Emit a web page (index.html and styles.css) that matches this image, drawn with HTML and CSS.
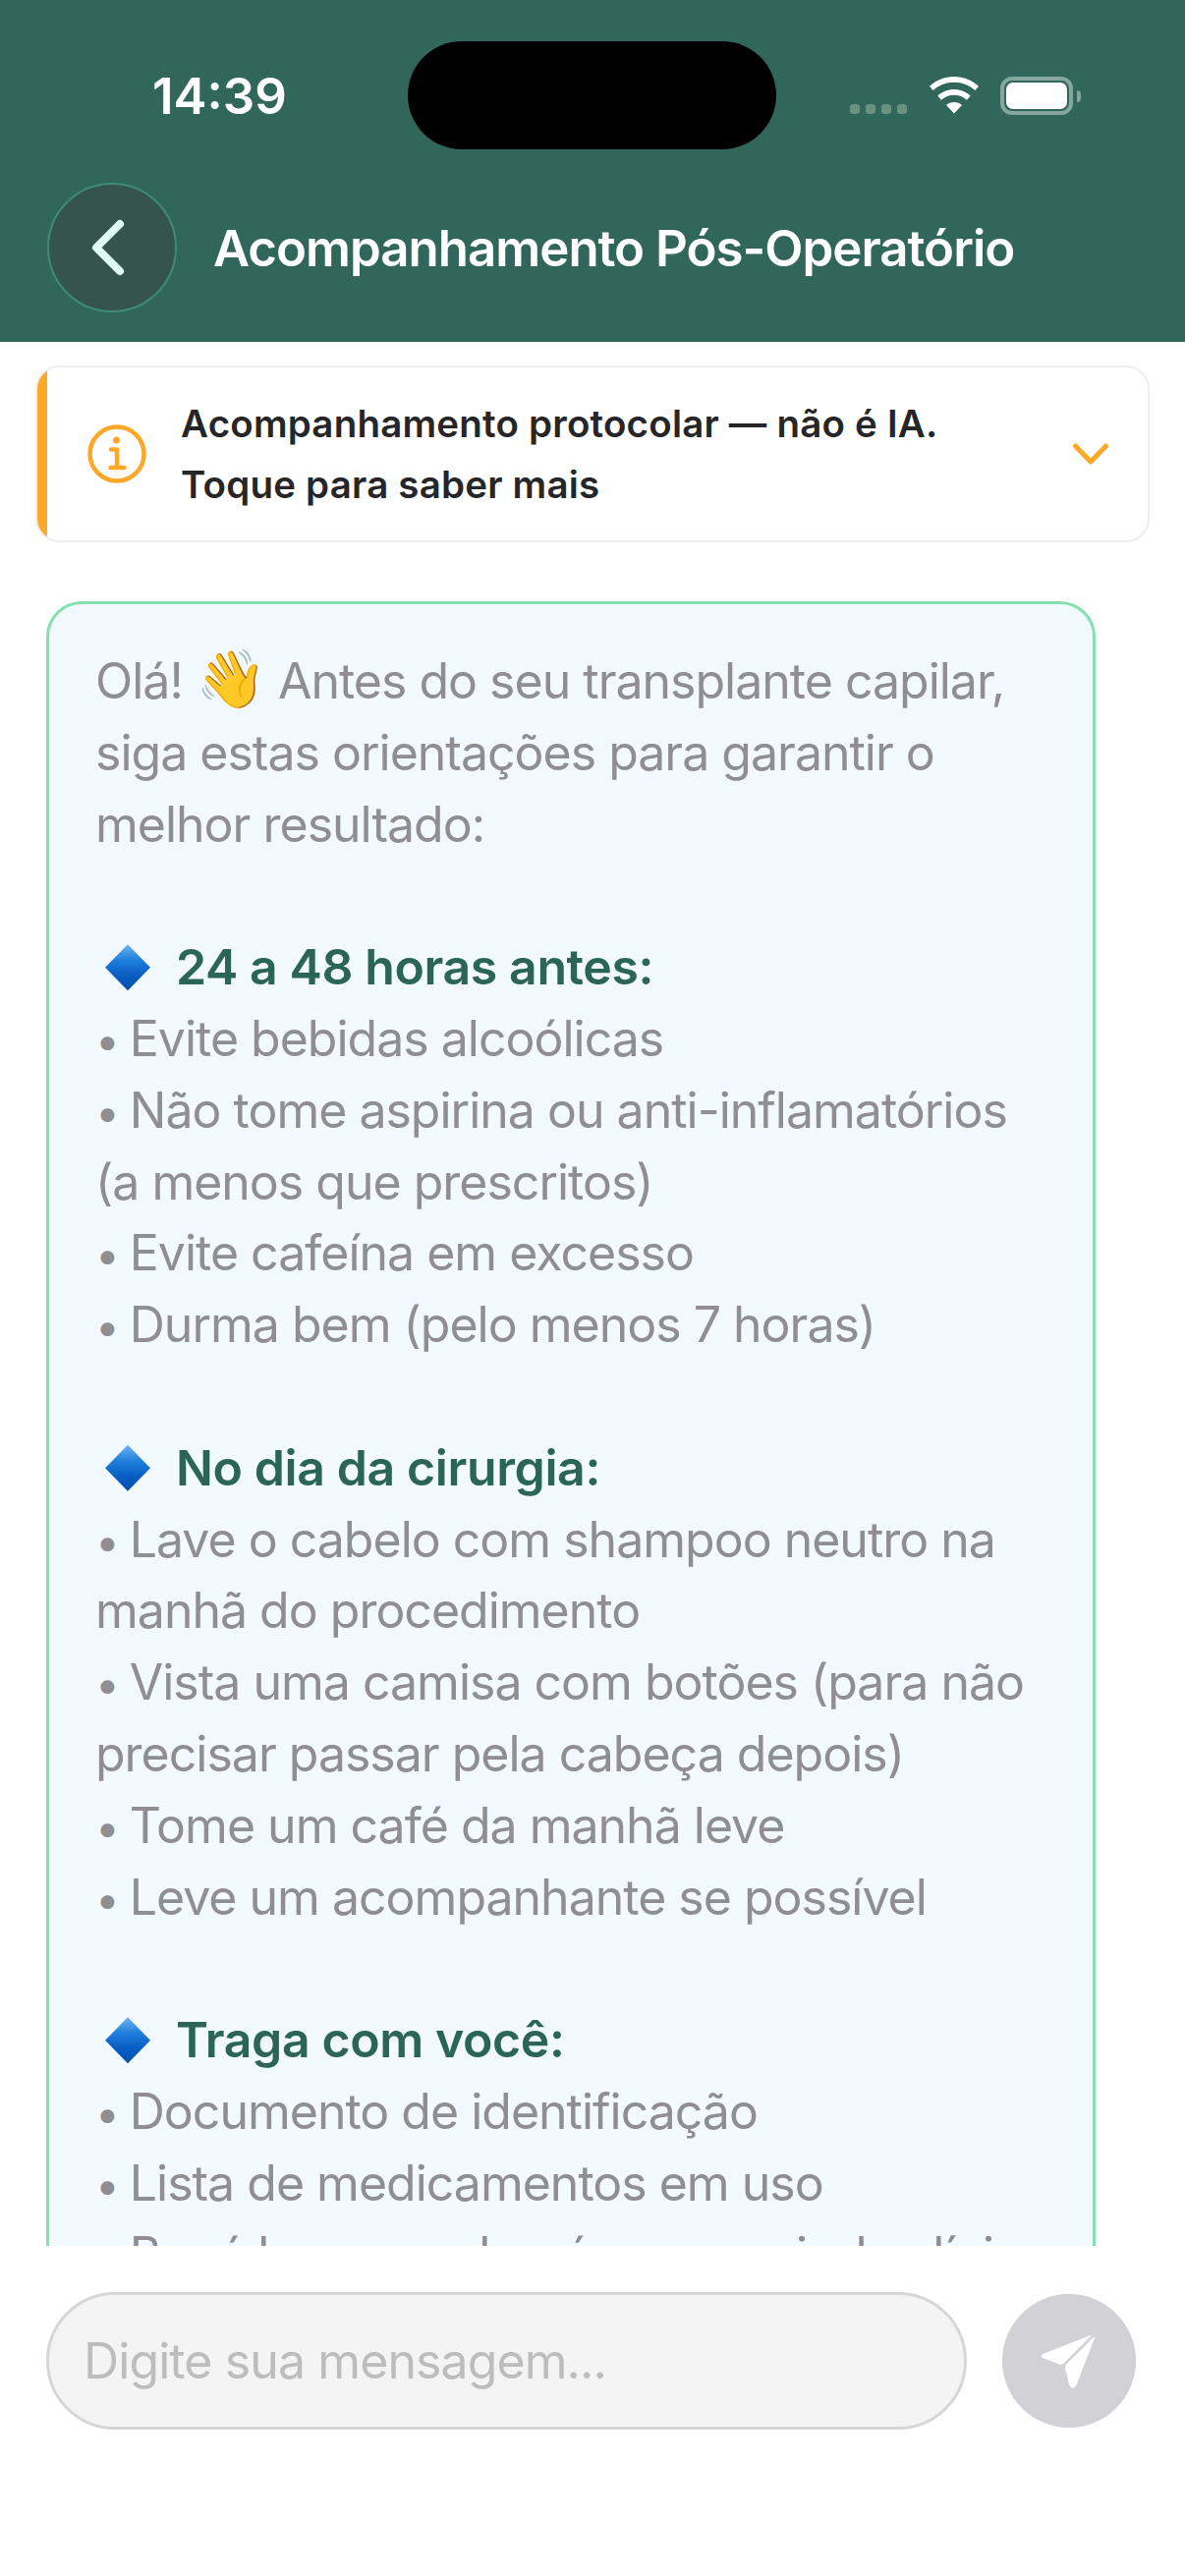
FILE: index.html
```html
<!doctype html>
<html lang="pt-BR">
<head>
<title>Acompanhamento Pós-Operatório</title>
<meta charset="utf-8" />
<link rel="stylesheet" href="styles.css">
</head>
<body>
    <div class="phone">
        <header class="top">
            <div class="status">
                <span class="time">14:39</span>
                <div class="island"></div>
                <div class="status-icons">
                    <div class="signal"><i></i><i></i><i></i><i></i></div>
                    <svg class="wifi" width="52" height="38" viewBox="0 0 52 38">
                        <path fill="#fff" d="M26 0C16 0 7.500 3.800 1 9.800L4.600 14C10.200 9 17.700 5.800 26 5.800S41.800 9 47.400 14L51 9.800C44.500 3.800 36 0 26 0Z"/>
                        <path fill="#fff" d="M26 13C19.500 13 13.700 15.500 9.300 19.500L13 23.800C16.400 20.700 21 18.800 26 18.800S35.600 20.700 39 23.800L42.700 19.500C38.300 15.500 32.500 13 26 13Z"/>
                        <path fill="#fff" d="M26 26C23 26 20.200 27.100 18 29L26 37.500L34 29C31.800 27.100 29 26 26 26Z"/>
                    </svg>
                    <div class="battery"><div class="battery-fill"></div></div>
                    <div class="battery-tip"></div>
                </div>
            </div>
            <div class="nav">
                <button class="back">
                    <svg width="40" height="60" viewBox="0 0 40 60"><path d="M32 6 L8 30 L32 54" fill="none" stroke="#dffbf3" stroke-width="8" stroke-linecap="round" stroke-linejoin="round"/></svg>
                </button>
                <h1>Acompanhamento Pós-Operatório</h1>
            </div>
        </header>

        <div class="notice">
            <div class="notice-bar"></div>
            <svg class="notice-icon" width="60" height="60" viewBox="0 0 60 60">
                <circle cx="30" cy="30" r="27.500" fill="none" stroke="#ffa726" stroke-width="4.500"/>
                <circle cx="29.500" cy="16" r="3.500" fill="#ffa726"/>
                <path d="M24 25.500H30V44M23.500 44H37.500" fill="none" stroke="#ffa726" stroke-width="4.500" stroke-linecap="round" stroke-linejoin="round"/>
            </svg>
            <p class="notice-text">Acompanhamento protocolar — não é IA.<br>Toque para saber mais</p>
            <svg class="notice-arrow" width="38" height="24" viewBox="0 0 38 24"><path d="M3.500 4 L19 20 L34.500 4" fill="none" stroke="#ffa726" stroke-width="5" stroke-linecap="round" stroke-linejoin="round"/></svg>
        </div>

        <main class="chat">
            <div class="bubble">
                <p>Olá! <span class="emoji">👋</span> Antes do seu transplante capilar, siga estas orientações para garantir o melhor resultado:</p>
                <p class="gap"><b><span class="diamond"></span>24 a 48 horas antes:</b></p>
                <p><span class="dot">•</span>Evite bebidas alcoólicas</p>
                <p><span class="dot">•</span>Não tome aspirina ou anti-inflamatórios (a menos que prescritos)</p>
                <p><span class="dot">•</span>Evite cafeína em excesso</p>
                <p><span class="dot">•</span>Durma bem (pelo menos 7 horas)</p>
                <p class="gap"><b><span class="diamond"></span>No dia da cirurgia:</b></p>
                <p><span class="dot">•</span>Lave o cabelo com shampoo neutro na manhã do procedimento</p>
                <p><span class="dot">•</span>Vista uma camisa com botões (para não precisar passar pela cabeça depois)</p>
                <p><span class="dot">•</span>Tome um café da manhã leve</p>
                <p><span class="dot">•</span>Leve um acompanhante se possível</p>
                <p class="gap"><b><span class="diamond"></span>Traga com você:</b></p>
                <p><span class="dot">•</span>Documento de identificação</p>
                <p><span class="dot">•</span>Lista de medicamentos em uso</p>
                <p class="one-line"><span class="dot">•</span>Boné largo ou chapéu para sair da clínica</p>
            </div>
        </main>

        <footer class="composer">
            <div class="input">Digite sua mensagem...</div>
            <button class="send">
                <svg width="60" height="60" viewBox="144 158 180 180">
                    <path fill="#fff" d="M305 168 L156 226 Q143 233 154 240 L208 260 Q213 261 216 257 L303 170 Z"/>
                    <path fill="#fff" d="M311 174 L226 258 Q221 263 222 270 L235 323 Q245 340 256 323 L313 176 Z"/>
                </svg>
            </button>
        </footer>
    </div>
</body>
</html>
```

FILE: styles.css
```css
*{
    margin: 0;
    padding: 0;
    box-sizing: border-box;
}
html, body{
    height: 100%;
    background: #fff;
}
body{
    font-family: Inter, "Noto Sans", sans-serif;
}
.phone{
    width: 1206px;
    height: 2622px;
    display: flex;
    flex-direction: column;
    overflow: hidden;
}

/* topo */
.top{
    height: 348px;
    background: #31665a;
    flex: none;
}
.status{
    height: 186px;
    padding: 42px 106px 0 155px;
    display: flex;
    justify-content: space-between;
    position: relative;
}
.time{
    font-size: 51px;
    font-weight: 600;
    line-height: 58px;
    margin-top: 27px;
    color: #fff;
}
.island{
    position: absolute;
    left: 415px;
    top: 42px;
    width: 375px;
    height: 110px;
    border-radius: 55px;
    background: #000;
}
.status-icons{
    display: flex;
    align-items: flex-start;
    margin-top: 36px;
}
.signal{
    display: flex;
    gap: 6px;
    margin: 28px 22px 0 0;
}
.signal i{
    width: 10px;
    height: 10px;
    border-radius: 3px;
    background: #68917f;
}
.wifi{
    margin: 0 21px 0 0;
}
.battery{
    width: 74px;
    height: 39px;
    border: 4px solid #85a79e;
    border-radius: 12px;
    padding: 2px;
}
.battery-fill{
    width: 100%;
    height: 100%;
    background: #fff;
    border-radius: 7px;
}
.battery-tip{
    width: 4px;
    height: 12px;
    margin: 14px 0 0 4px;
    background: #85a79e;
    border-radius: 0 4px 4px 0;
}
.nav{
    display: flex;
    align-items: center;
    padding-left: 48px;
    height: 132px;
}
.back{
    width: 132px;
    height: 132px;
    border-radius: 50%;
    background: #36544e;
    border: 2px solid #3d8b78;
    display: flex;
    align-items: center;
    justify-content: center;
    flex: none;
}
.back svg{
    margin-right: 9px;
}
.nav h1{
    margin-left: 37px;
    font-size: 51px;
    font-weight: 600;
    letter-spacing: -1px;
    color: #fff;
    white-space: nowrap;
}

/* aviso */
.notice{
    margin: 24px 36px 0;
    height: 180px;
    flex: none;
    display: flex;
    align-items: center;
    border: 2px solid #eeeeee;
    border-radius: 24px;
    background: #fff;
    padding: 0 39px 0 0;
    overflow: hidden;
}
.notice-bar{
    width: 10px;
    align-self: stretch;
    background: #ffa726;
    flex: none;
}
.notice-icon{
    margin-left: 41px;
    flex: none;
}
.notice-text{
    flex: 1;
    margin-left: 35px;
    font-size: 38.500px;
    font-weight: 600;
    letter-spacing: 0.2px;
    line-height: 62px;
    color: #262628;
}

/* conversa */
.chat{
    flex: none;
    height: 1734px;
    overflow: hidden;
    padding: 60px 0 0 47px;
}
.bubble{
    width: 1068px;
    background: #f2f9ff;
    border: 3px solid #86e0ad;
    border-radius: 36px;
    padding: 42px 47px 40px;
    font-size: 50px;
    letter-spacing: -1px;
    line-height: 72.800px;
    color: #8e8e93;
}
.gap{
    margin-top: 72.800px;
}
.one-line{
    white-space: nowrap;
}
.bubble b{
    font-weight: 600;
    letter-spacing: -0.4px;
    color: #2a6557;
}
.emoji{
    font-size: 58px;
    line-height: 0;
}
.dot{
    margin-right: 11px;
    font-size: 44px;
    line-height: 0;
}
.diamond{
    display: inline-block;
    width: 46px;
    height: 47px;
    margin: 0 26px 0 10px;
    vertical-align: -6px;
    clip-path: polygon(50% 0, 100% 50%, 50% 100%, 0 50%);
    background: linear-gradient(180deg, #6db3f0 0, #1f7fdc 35%, #0a5fc4 65%, #0050ad 100%);
}

/* campo de mensagem */
.composer{
    display: flex;
    align-items: center;
    padding: 47px 50px 0 47px;
}
.input{
    width: 938px;
    height: 140px;
    border: 3px solid #d6d6d6;
    border-radius: 70px;
    background: #f4f4f4;
    padding-left: 35px;
    display: flex;
    align-items: center;
    font-size: 50px;
    letter-spacing: -0.9px;
    color: #bdbdbd;
}
.send{
    width: 136px;
    height: 136px;
    margin-left: 36px;
    border: none;
    border-radius: 50%;
    background: #d1d1d6;
    display: flex;
    align-items: center;
    justify-content: center;
}
```
